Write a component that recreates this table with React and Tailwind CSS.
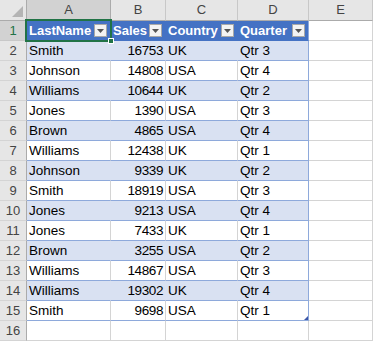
import React from "react";

const ROWS = [
  ["Smith", 16753, "UK", "Qtr 3"],
  ["Johnson", 14808, "USA", "Qtr 4"],
  ["Williams", 10644, "UK", "Qtr 2"],
  ["Jones", 1390, "USA", "Qtr 3"],
  ["Brown", 4865, "USA", "Qtr 4"],
  ["Williams", 12438, "UK", "Qtr 1"],
  ["Johnson", 9339, "UK", "Qtr 2"],
  ["Smith", 18919, "USA", "Qtr 3"],
  ["Jones", 9213, "USA", "Qtr 4"],
  ["Jones", 7433, "UK", "Qtr 1"],
  ["Brown", 3255, "USA", "Qtr 2"],
  ["Williams", 14867, "USA", "Qtr 3"],
  ["Williams", 19302, "UK", "Qtr 4"],
  ["Smith", 9698, "USA", "Qtr 1"],
];

const HEADERS = ["LastName", "Sales", "Country", "Quarter"];

function Dropdown() {
  return (
    <span className="ml-auto mr-[3px] w-[13px] h-[13px] bg-[#f3f3f3] border border-[#a8a8a8] flex items-center justify-center">
      <svg width="7" height="4" viewBox="0 0 7 4">
        <path d="M0 0h7L3.5 4z" fill="#555" />
      </svg>
    </span>
  );
}

export default function App() {
  return (
    <div
      className="relative w-[373px] h-[341px] bg-white overflow-hidden text-[13.5px] text-black"
      style={{ fontFamily: "'Liberation Sans', Arial, sans-serif" }}
    >
      {/* column headers */}
      <div className="flex h-[21px] text-[13px] text-[#444]">
        <div className="w-[27px] bg-[#e6e6e6] border-r border-b border-[#ababab] relative">
          <svg className="absolute right-[3px] bottom-[3px]" width="11" height="11" viewBox="0 0 11 11">
            <path d="M11 0v11H0z" fill="#b4b4b4" />
          </svg>
        </div>
        <div className="w-[84px] bg-[#d2d2d2] border-r border-b border-[#ababab] flex items-center justify-center">A</div>
        <div className="w-[55px] bg-[#e6e6e6] border-r border-b border-[#ababab] border-r-[#c8c8c8] flex items-center justify-center">B</div>
        <div className="w-[72px] bg-[#e6e6e6] border-r border-b border-[#ababab] border-r-[#c8c8c8] flex items-center justify-center">C</div>
        <div className="w-[71px] bg-[#e6e6e6] border-r border-b border-[#ababab] border-r-[#c8c8c8] flex items-center justify-center">D</div>
        <div className="w-[64px] bg-[#e6e6e6] border-r border-b border-[#ababab] border-r-[#c8c8c8] flex items-center justify-center">E</div>
      </div>

      {/* row 1: table header */}
      <div className="flex h-[20px]">
        <div className="w-[27px] bg-[#d2d2d2] border-r border-b border-[#ababab] border-b-[#c8c8c8] flex items-center justify-center text-[13px] text-[#217346]">1</div>
        {HEADERS.map((h, i) => (
          <div
            key={h}
            className={`${["w-[84px]", "w-[55px]", "w-[72px]", "w-[71px]"][i]} bg-[#4472c4] border-b border-r ${i === 3 ? "border-r-[#8ea9db]" : "border-r-[#4472c4]"} border-b-[#4472c4] flex items-center pl-[2px] text-white text-[13px] font-bold`}
          >
            <span className="pt-[1px]">{h}</span>
            <Dropdown />
          </div>
        ))}
        <div className="w-[64px] border-r border-b border-[#d4d4d4]" />
      </div>

      {/* data rows */}
      {ROWS.map((r, idx) => {
        const band = idx % 2 === 0;
        const inner = band ? "bg-[#d9e1f2] border-r-[#d9e1f2]" : "bg-white border-r-[#d4d4d4]";
        return (
          <div key={idx} className="flex h-[20px]">
            <div className="w-[27px] bg-[#e6e6e6] border-r border-b border-[#ababab] border-b-[#d4d4d4] flex items-center justify-center text-[13px] text-[#444]">
              {idx + 2}
            </div>
            <div className={`w-[84px] border-r border-b border-b-[#8ea9db] ${inner} flex items-center pl-[2px] pt-[1px]`}>{r[0]}</div>
            <div className={`w-[55px] border-r border-b border-b-[#8ea9db] ${inner} flex items-center justify-end pr-[2px] pt-[1px] tracking-[-0.4px]`}>{r[1]}</div>
            <div className={`w-[72px] border-r border-b border-b-[#8ea9db] ${inner} flex items-center pl-[2px] pt-[1px]`}>{r[2]}</div>
            <div className={`w-[71px] border-r border-b border-[#8ea9db] ${band ? "bg-[#d9e1f2]" : "bg-white"} flex items-center pl-[2px] pt-[1px]`}>{r[3]}</div>
            <div className="w-[64px] border-r border-b border-[#d4d4d4]" />
          </div>
        );
      })}

      {/* row 16 */}
      <div className="flex h-[20px]">
        <div className="w-[27px] bg-[#e6e6e6] border-r border-b border-[#ababab] border-b-[#d4d4d4] flex items-center justify-center text-[13px] text-[#444]">16</div>
        <div className="w-[84px] border-r border-b border-[#d4d4d4]" />
        <div className="w-[55px] border-r border-b border-[#d4d4d4]" />
        <div className="w-[72px] border-r border-b border-[#d4d4d4]" />
        <div className="w-[71px] border-r border-b border-[#d4d4d4]" />
        <div className="w-[64px] border-r border-b border-[#d4d4d4]" />
      </div>

      {/* active cell selection */}
      <div className="absolute left-[25px] top-[19px] w-[87px] h-[23px] border-2 border-[#217346] pointer-events-none" />
      <div className="absolute left-[108px] top-[38px] w-[6px] h-[6px] bg-[#217346] border border-white" />

      {/* table resize handle */}
      <svg className="absolute left-[304px] top-[316px]" width="4" height="4" viewBox="0 0 4 4">
        <path d="M4 0v4H0z" fill="#3b56a8" />
      </svg>
    </div>
  );
}
